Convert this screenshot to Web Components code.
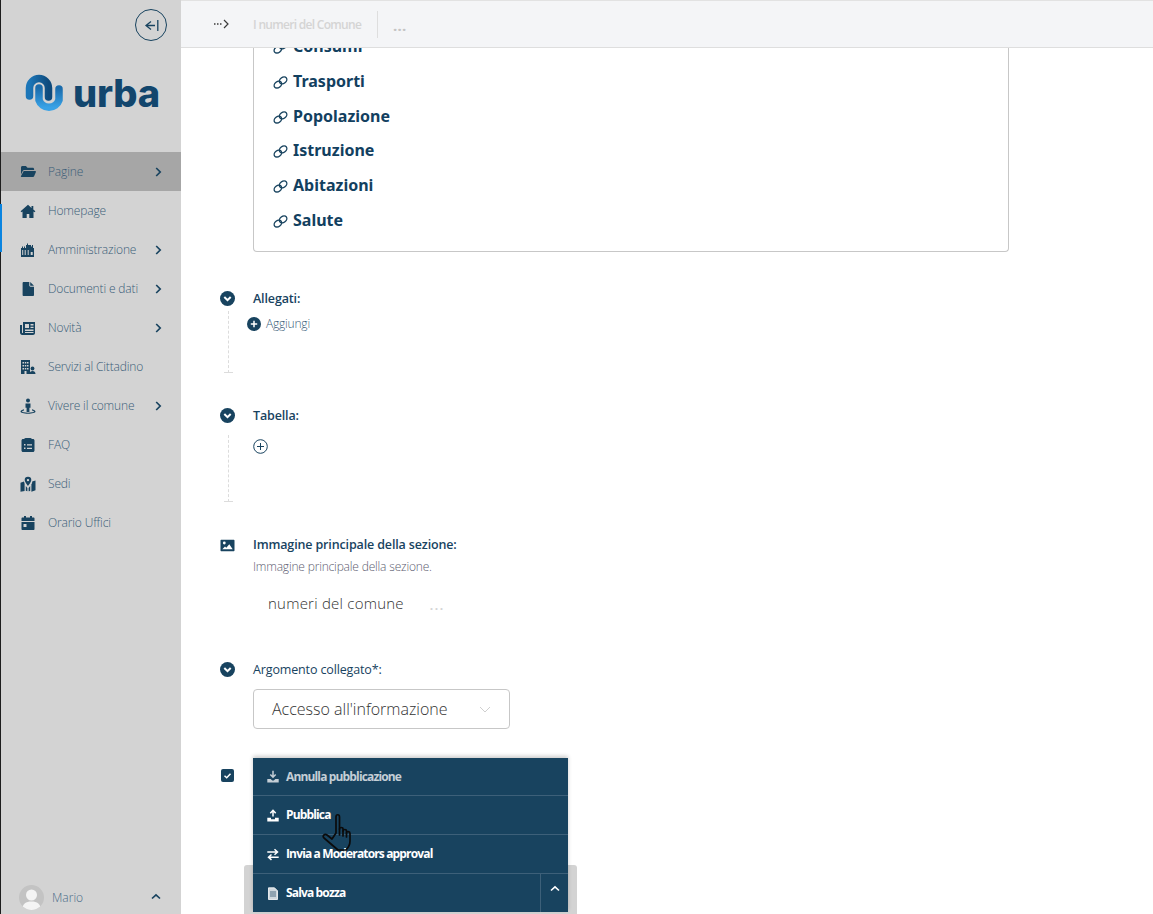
<!DOCTYPE html>
<html lang="it"><head><meta charset="utf-8"><title>Urba</title>
<style>
html,body{margin:0;height:100%;overflow:hidden;background:#fff}
body{font-family:"Open Sans","Noto Sans",sans-serif;color:#18435f}
</style></head><body>
<urba-app>
  <urba-sidebar slot="side"></urba-sidebar>
  <urba-topbar slot="top"></urba-topbar>
  <urba-form slot="main"></urba-form>
  <urba-actions slot="over"></urba-actions>
</urba-app>
<script>
const I={
folder:'<path d="M1 3.500C1 2.700 1.600 2 2.400 2h3.500l1.600 1.700h5.200c.8 0 1.400.6 1.400 1.400V6H4.300c-.7 0-1.300.4-1.600 1L1 10.600z"/><path d="M3.700 7h11.600c.5 0 .8.500.6 1l-1.800 4.300c-.2.4-.6.7-1.100.7H1.400c-.4 0-.6-.4-.5-.7z"/>',
home:'<path d="M8 1.800 .6 8.200l.9 1 1-.8V15h4.200v-4h2.600v4h4.200V8.400l1 .8.9-1-2.100-1.800V3h-1.800v1.900z"/>',
bank:'<path fill-rule="evenodd" d="M1 6h1V4.500h1V6h1V4.500h1V6h1V3h1V1.500h1V3h3v1.500h1V3h1v3h1v9H1zM2.200 8v5h1V8zm2.500 0v5h1V8zm3 0v5h1V8zm3 2v3h2v-3z"/>',
file:'<path d="M3.700 1h5.600v3.600c0 .6.500 1.100 1.100 1.100H14v8.200c0 .6-.5 1.100-1.100 1.100H3.700c-.6 0-1.100-.5-1.100-1.100V2.100C2.600 1.500 3.100 1 3.700 1zM10.200 1 14 4.800h-3.800z"/>',
news:'<path fill-rule="evenodd" d="M3 2h12v11c0 1-.8 2-2 2H2.200C1 15 0 14 0 12.800V5h2v7.800c0 .3.3.3.5.3s.5-.2.5-.4zm2 2v4h4V4zm5.500 0v1.500h3V4zm0 2.800v1.300h3V6.800zM5 9.500V11h8.500V9.500zm0 2.500v1h8.500v-1z"/><path fill="#d3d3d3" d="M6.300 5.300h1.500v1.500H6.300z"/>',
city:'<path fill-rule="evenodd" d="M1 1h9v14H6.500v-3h-2v3H1zm1.500 2v1.500H4V3zm2.300 0v1.500h1.500V3zm2.200 0v1.500h1.500V3zM2.500 6v1.500H4V6zm2.300 0v1.500h1.500V6zM7 6v1.500h1.500V6zM2.500 9v1.500H4V9zm2.300 0v1.500h1.500V9zM7 9v1.500h1.500V9z"/><circle cx="12.500" cy="9.500" r="1.900"/><path d="M9.500 15c0-2 1.300-3 3-3s3 1 3 3z"/>',
street:'<circle cx="8" cy="2.500" r="2"/><path d="M5.500 5.500h5v4.200H9.400V14H6.600V9.700H5.500z"/><path d="M4 11.200C1.800 11.800.5 12.600.5 13.500c0 1.300 3.300 2.200 7.500 2.200s7.500-.9 7.500-2.200c0-.9-1.300-1.700-3.500-2.300v1.200c1.200.3 2 .8 2 1.100 0 .6-2.700 1.200-6 1.200s-6-.6-6-1.200c0-.3.8-.8 2-1.100z"/>',
clip:'<path fill-rule="evenodd" d="M5.800 1h4.400a2 2 0 0 1 1.700 1H13c.8 0 1.500.7 1.500 1.500v10c0 .8-.7 1.500-1.500 1.500H3c-.8 0-1.500-.7-1.500-1.500v-10C1.500 2.700 2.200 2 3 2h1.100a2 2 0 0 1 1.700-1zM4 7v1.500h1.500V7zm3 .2v1.200h5V7.200zM4 10.500V12h1.500v-1.500zm3 .2v1.200h5v-1.200z"/>',
map:'<path d="M8 .8a3.300 3.300 0 0 0-3.300 3.300C4.700 6.200 8 10 8 10s3.300-3.800 3.300-5.900A3.300 3.300 0 0 0 8 .8zm0 4.500a1.200 1.200 0 1 1 0-2.400 1.200 1.200 0 0 1 0 2.400z"/><path d="M.5 6.800 4 5.600l.6 2.200V15L.5 15.800zM5.800 10 7.400 12v3.200l-1.600-.5zM10.200 10l-1.600 2v3.200L10.200 15zM12 7.800l.2-2.200 3.300-1.200v9.800L11.400 15.800V7.800z"/>',
cal:'<path fill-rule="evenodd" d="M4 1h2v1.500h4V1h2v1.500h1.500c.6 0 1 .4 1 1V6h-13V3.500c0-.6.4-1 1-1H4zM1.500 7h13v7c0 .6-.4 1-1 1h-11c-.6 0-1-.4-1-1zm2 2v3h3V9z"/>'
};
const icon=(n,s=16)=>`<svg width="${s}" height="${s}" viewBox="0 0 16 16" fill="currentColor" aria-hidden="true">${I[n]}</svg>`;
const define=(name,css,html)=>customElements.define(name,class extends HTMLElement{
  constructor(){super();this.attachShadow({mode:'open'}).innerHTML=`<style>${css}</style>${typeof html==='function'?html(this):html}`}
});
define('urba-app',`
:host{display:grid;grid-template-columns:181px 1fr;grid-template-rows:48px 1fr;width:1153px;height:914px;position:relative;overflow:hidden}
.s{grid-row:1/3;display:block;min-height:0}
.t{grid-column:2;display:block}
.m{grid-column:2;display:block;min-height:0;overflow:hidden}
`,`<div class="s"><slot name="side"></slot></div><div class="t"><slot name="top"></slot></div><div class="m"><slot name="main"></slot></div><slot name="over"></slot>`);

define('nav-item',`
:host{display:flex;align-items:center;height:39px;padding-left:19px;color:#3a5d78;font:300 12px/1 var(--f);letter-spacing:-.15px;position:relative}
:host([active]){background:#a6a6a6}
.i{width:16px;height:16px;color:#18435f;display:flex;margin-right:12px;flex:none}
.t{flex:1;white-space:nowrap}
.c{position:absolute;left:154px;top:15px;color:#18435f}
`,h=>`<span class="i">${icon(h.getAttribute('icon'))}</span><span class="t"><slot></slot></span>${h.hasAttribute('more')?'<svg class="c" width="7" height="10" viewBox="0 0 7 10" fill="none" stroke="currentColor" stroke-width="1.700"><path d="M1.200 1 5.200 5l-4 4"/></svg>':''}`);

define('urba-sidebar',`
:host{--f:"Open Sans",sans-serif;display:flex;flex-direction:column;height:914px;box-sizing:border-box;background:#d3d3d3;border-left:1px solid #1d1d1d;position:relative;font-family:"Open Sans",sans-serif}
.mark{position:absolute;left:-1px;top:204px;width:2px;height:48px;background:#0a84e0}
.top{display:flex;justify-content:flex-end;padding:9px 13px 0 0;height:33px;padding-right:14px}
.back{width:32px;height:32px;box-sizing:border-box;border:1px solid #18435f;border-radius:50%;display:flex;align-items:center;justify-content:center;color:#18435f;background:transparent}
.logo{display:flex;align-items:center;gap:9px;height:44px;margin:30px 0 36px 24px}
.word{font:800 38px/1 Inter,sans-serif;color:#12466d;letter-spacing:-.2px;margin-top:-3px}
nav{display:block;flex:1}
.user{display:flex;align-items:center;height:34px;padding-left:18px;color:#4a6c88;font-size:12px;font-weight:300;position:relative}
.av{width:25px;height:25px;border-radius:50%;background:#c3c3c3;overflow:hidden;margin-right:8px}
.user svg.c{position:absolute;left:150px;top:13px;color:#18435f}
`,`<div class="mark"></div>
<div class="top"><div class="back"><svg width="17" height="13" viewBox="0 0 17 13" fill="none" stroke="currentColor" stroke-width="1.300"><path d="M8 10.500 3 6.500 8 2.500M3 6.500h9M14.800 1v11"/></svg></div></div>
<div class="logo">
<svg width="39" height="40" viewBox="0 0 39 40" fill="none" aria-hidden="true">
<defs><linearGradient id="g" x1="0" y1="0" x2="0" y2="1"><stop offset="0" stop-color="#1a6bab"/><stop offset="1" stop-color="#39a2e6"/></linearGradient>
<linearGradient id="h" x1="0" y1="0" x2="1" y2="0"><stop offset="0" stop-color="#1c76b8"/><stop offset="1" stop-color="#0e4a7c"/></linearGradient></defs>
<path d="M4.500 22V14a9.500 9.500 0 0 1 19 0v9" stroke="url(#h)" stroke-width="7.500" stroke-linecap="round"/>
<path d="M14 14V26a10.500 10.500 0 0 0 20 0v-11" stroke="url(#g)" stroke-width="7.500" stroke-linecap="round"/>
</svg>
<span class="word">urba</span></div>
<nav>
<nav-item icon="folder" more active>Pagine</nav-item>
<nav-item icon="home">Homepage</nav-item>
<nav-item icon="bank" more>Amministrazione</nav-item>
<nav-item icon="file" more>Documenti e dati</nav-item>
<nav-item icon="news" more>Novità</nav-item>
<nav-item icon="city">Servizi al Cittadino</nav-item>
<nav-item icon="street" more>Vivere il comune</nav-item>
<nav-item icon="clip">FAQ</nav-item>
<nav-item icon="map">Sedi</nav-item>
<nav-item icon="cal">Orario Uffici</nav-item>
</nav>
<div class="user"><div class="av"><svg width="25" height="25" viewBox="0 0 25 25" fill="#f4f4f4"><circle cx="12.500" cy="10" r="5.500"/><path d="M3 25c0-6 4-8.500 9.500-8.500S22 19 22 25z"/></svg></div>Mario
<svg class="c" width="10" height="7" viewBox="0 0 10 7" fill="none" stroke="currentColor" stroke-width="1.700"><path d="M1 5.500 5 1.800l4 3.700"/></svg></div>`);

define('urba-topbar',`
:host{display:flex;align-items:center;height:48px;box-sizing:border-box;background:#f4f5f7;border-top:1px solid #e2e2e2;border-bottom:1px solid #dedede;font:600 12px "Open Sans",sans-serif;color:#d4d4d4;letter-spacing:-.7px}
.a{display:flex;margin-left:33px;color:#3b3b3b}
.t{margin-left:23px}
.sep{width:1px;height:27px;background:#dedede;margin:0 15px 0 16px}
.d{color:#c4c4c4;font-weight:800;font-size:13px;letter-spacing:.8px;margin-top:3px}
`,`<svg class="a" width="16" height="10" viewBox="0 0 16 10" fill="none" stroke="currentColor"><path d="M0 5h1.500M3 5h1.500M6 5h1.500" stroke-width="1.300"/><path d="M10 1l4 4-4 4" stroke-width="1.200"/></svg><span class="t">I numeri del Comune</span><span class="sep"></span><span class="d">...</span>`);

define('link-row',`
:host{display:flex;align-items:center;height:34.700px;padding-left:19px;font:700 16px/1 "Noto Sans","Open Sans",sans-serif;color:#12405f}
svg{margin-right:5px;margin-top:3px;color:#18435f}
`,`<svg width="15" height="15" viewBox="0 0 15 15" fill="none" stroke="currentColor" stroke-width="1.400"><ellipse cx="4.900" cy="9.600" rx="4.100" ry="3" transform="rotate(-38 4.900 9.600)"/><ellipse cx="10.100" cy="5.400" rx="4.100" ry="3" transform="rotate(-38 10.100 5.400)"/></svg><span><slot></slot></span>`);

define('form-field',`
:host{display:grid;grid-template-columns:72px 1fr;font-family:"Open Sans",sans-serif}
.g{box-sizing:border-box;width:72px}
.ic{width:15px;height:15px;color:#18435f;display:flex;margin-left:39px}
:host([kind=img]) .ic{margin-top:1px}
.l{font:600 12.500px/16px "Open Sans",sans-serif;color:#18435f;letter-spacing:-.14px}
.b{min-width:0}
`,h=>{
  const k=h.getAttribute('kind');
  const ic={chev:'<svg width="15" height="15" viewBox="0 0 15 15"><circle cx="7.500" cy="7.500" r="7.500" fill="currentColor"/><path d="M4.300 6 7.500 9.200 10.700 6" fill="none" stroke="#fff" stroke-width="2"/></svg>',
  img:'<svg width="15" height="15" viewBox="0 0 15 15"><path fill="currentColor" d="M1.500 1.800h12c.5 0 1 .4 1 1v9.500c0 .6-.5 1-1 1h-12c-.6 0-1-.4-1-1V2.800c0-.6.4-1 1-1z"/><circle cx="4.300" cy="5" r="1.400" fill="#fff"/><path fill="#fff" d="M2.300 11.300 5 8.500l1.300 1.300 3-3.600 3.400 5.100z"/></svg>',
  chk:'<svg width="15" height="15" viewBox="0 0 15 15"><rect x="1" y="1" width="13" height="13" rx="2" fill="currentColor"/><path d="M4.500 7.700 6.700 9.700 10.500 5.700" fill="none" stroke="#fff" stroke-width="1.500"/></svg>'}[k];
  return `<div class="g"><span class="ic">${ic}</span></div><div class="b"><div class="l"><slot name="label"></slot></div><slot></slot></div>`;
});

define('guide-line',`
:host{display:block;position:absolute;left:47px;width:10px;border-left:1px dashed #dcdcdc;height:var(--h)}
:host::after{content:"";position:absolute;left:-5px;bottom:0;width:9px;height:1px;background:#dcdcdc}
`,``);

define('urba-form',`
:host{display:block;position:relative;font-family:"Open Sans",sans-serif;height:866px;overflow:hidden}
.card{margin:-19px 0 0 72px;width:756px;height:223px;box-sizing:border-box;border:1px solid #c7c7c7;border-radius:0 0 4px 4px;border-top:0}
.add{display:flex;align-items:center;gap:5px;margin:9px 0 0 -6px;font:300 12px/16px "Open Sans",sans-serif;color:#3a5d78;letter-spacing:-.2px}
.plus{display:block;margin-top:15px}
.s1{margin-top:39px;height:117px}
.s2{height:129px}
.s3{height:125px}
.s4{height:106px}
.help{font:300 12px/14px "Open Sans",sans-serif;letter-spacing:-.18px;margin-top:7px;color:#5c5c70}
.name{font:300 15px/20px "Open Sans",sans-serif;letter-spacing:.23px;color:#333;margin:19px 0 0 15px;display:flex;gap:26px}
.name i{font:700 12px/20px "Open Sans",sans-serif;color:#d4d4d4;letter-spacing:1.500px;margin-top:3px}
.sel{width:257px;height:40px;box-sizing:border-box;border:1px solid #c7c7c7;border-radius:4px;margin-top:11px;display:flex;align-items:center;padding:0 18px;justify-content:space-between;font:300 16px "Open Sans",sans-serif;color:#333}
`,`<div class="card">
<link-row>Consumi</link-row><link-row>Trasporti</link-row><link-row>Popolazione</link-row><link-row>Istruzione</link-row><link-row>Abitazioni</link-row><link-row>Salute</link-row>
</div>
<guide-line style="top:263px;--h:62px"></guide-line>
<guide-line style="top:387px;--h:67px"></guide-line>
<form-field class="s1" kind="chev"><span slot="label">Allegati:</span>
  <div class="add"><svg width="14" height="14" viewBox="0 0 14 14"><circle cx="7" cy="7" r="7" fill="#18435f"/><path d="M3.800 7h6.400M7 3.800v6.400" stroke="#fff" stroke-width="1.500"/></svg>Aggiungi</div></form-field>
<form-field class="s2" kind="chev"><span slot="label">Tabella:</span>
  <svg class="plus" width="15" height="15" viewBox="0 0 15 15" fill="none" stroke="#18435f"><circle cx="7.500" cy="7.500" r="6.800"/><path d="M4 7.500h7M7.500 4v7"/></svg></form-field>
<form-field class="s3" kind="img"><span slot="label">Immagine principale della sezione:</span>
  <div class="help">Immagine principale della sezione.</div>
  <div class="name">numeri del comune <i>...</i></div></form-field>
<form-field class="s4" kind="chev"><span slot="label" style="font-weight:500">Argomento collegato*:</span>
  <div class="sel">Accesso all'informazione<svg width="12" height="7" viewBox="0 0 12 7" fill="none" stroke="#cfcfcf"><path d="M1 1l5 5 5-5"/></svg></div></form-field>
<form-field kind="chk"></form-field>`);

define('act-row',`
:host{display:flex;align-items:center;height:38px;border-bottom:1px solid #3d6079;padding-left:13px;font:700 12px/1 "Open Sans",sans-serif;letter-spacing:-.85px;color:#fff}
:host([dim]){color:#c4ced6;height:37px}
:host([last]){border-bottom:0}
svg{margin-right:6px;flex:none}
`,h=>{const d={dl:'<path d="M6.500 .8v6.200M3.800 4.500l2.700 2.700 2.700-2.700" fill="none" stroke="currentColor" stroke-width="1.500"/><path d="M.8 9h3.400l1.500 1.500h1.600L8.800 9h3.400v3.500H.8z" fill="currentColor"/>',
ul:'<path d="M6.500 7.500V1.500M3.800 4.300 6.500 1.300l2.700 3" fill="none" stroke="currentColor" stroke-width="1.500"/><path d="M.8 8.800h3.700v1.400h4V8.800h3.700v3.700H.8z" fill="currentColor"/>',
sw:'<path d="M.8 4h10M8 1.300 11 4 8 6.700M12.200 9.200H2.200M5 6.500 2 9.200l3 2.700" fill="none" stroke="currentColor" stroke-width="1.500"/>',
doc:'<path d="M2 .8h6l3 3v8.700H2z" fill="#cfd8de" stroke="#fff" stroke-width=".8"/><path d="M3.500 5h6M3.500 7h6M3.500 9h6" stroke="#18435f" stroke-width=".7"/>'}[h.getAttribute('icon')];
return `<svg width="14" height="13" viewBox="0 0 13 13">${d}</svg><span style="flex:1"><slot></slot></span>`});

define('urba-actions',`
:host{position:absolute;left:244px;top:865px;width:333px;height:49px;background:#d3d3d3;border-radius:3px 3px 0 0;display:block}
.menu{position:absolute;left:9px;bottom:2px;width:315px;background:#18435f;box-shadow:0 -2px 4px rgba(0,0,0,.2)}
.tog{position:absolute;right:0;top:0;bottom:0;width:28px;border-left:1px solid #3d6079;display:flex;align-items:flex-start;justify-content:center;padding-top:11px;box-sizing:border-box;color:#fff}
.wrap{position:relative}
.hand{position:absolute;left:69px;top:55px;pointer-events:none}
`,`<div class="menu"><act-row icon="dl" dim>Annulla pubblicazione</act-row><act-row icon="ul">Pubblica</act-row><act-row icon="sw">Invia a Moderators approval</act-row><div class="wrap"><act-row icon="doc" last>Salva bozza</act-row><div class="tog"><svg width="10" height="7" viewBox="0 0 10 7" fill="none" stroke="currentColor" stroke-width="1.600"><path d="M1 5.500 5 1.800l4 3.700"/></svg></div></div>
<svg class="hand" width="34" height="38" viewBox="0 0 34 38" fill="none" stroke="#0b0b0b" stroke-width="1.700" stroke-linejoin="round" stroke-linecap="round"><path d="M14 20V4c0-3 3.500-3 3.500 0v12c0-2 3.500-2 3.500 0v2c0-2 3.500-2 3.500 0v2c0-2 3.500-1.800 3.500 .5V28c0 4-2 7-4 9H16L2 25c-2-2 .5-4.500 3-3l5 4z"/><path d="M17.500 16v6M21 18v5M24.500 20v4"/></svg></div>`);
</script>
</body></html>
